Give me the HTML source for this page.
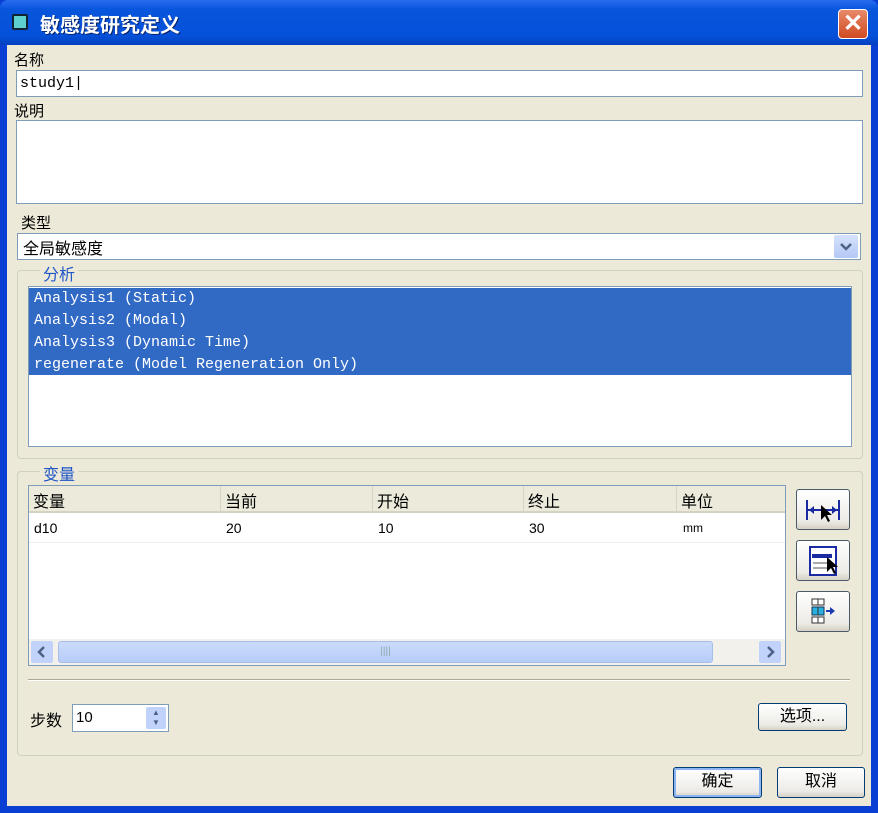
<!DOCTYPE html>
<html><head><meta charset="utf-8"><style>
*{box-sizing:border-box;margin:0;padding:0}
body{width:878px;height:813px;overflow:hidden;background:#0A3FD4;font-family:"Liberation Sans","Noto Sans CJK SC",sans-serif;font-size:15px;color:#000;position:relative}
.abs{position:absolute}
.title{left:0;top:0;width:878px;height:45px;background:linear-gradient(#2a6cf0,#0856dd 20%,#0550d8 80%,#0440c0);border-radius:8px 8px 0 0}
.content{left:7px;top:45px;width:864px;height:761px;background:#ECE9D8}
.inp{background:#fff;border:1px solid #7F9DB9}
.grp{border:1px solid #D0D0BF;border-radius:4px}
.leg{background:#ECE9D8;color:#1E56C8;padding:0 3px;font-size:16px}
.btn{background:linear-gradient(#fff,#ECEBE6 80%,#D6D0C5);border:1px solid #003C74;border-radius:3px;text-align:center;font-size:16px}
.mono{font-family:"Liberation Mono","Noto Sans CJK SC",monospace}
.hd{top:0;height:26px;border-right:1px solid #D8D5C7;padding:2px 4px;font-size:16px}
</style></head><body>
<div class="abs title"></div>
<div class="abs" style="left:12px;top:14px;width:16px;height:16px;background:#5dd0d0;border:2px solid #123;border-radius:2px"></div>
<div class="abs" style="left:40px;top:9px;color:#fff;font-size:20px;font-weight:bold;text-shadow:1px 1px #0a246a">敏感度研究定义</div>
<div class="abs" style="left:838px;top:9px;width:30px;height:30px;background:linear-gradient(#e88a6a,#d04a20);border:1px solid #fff;border-radius:4px;color:#fff;font-size:24px;line-height:27px;text-align:center;font-weight:bold">✕</div>
<div class="abs content"></div>

<div class="abs" style="left:14px;top:49px">名称</div>
<div class="abs inp mono" style="left:16px;top:70px;width:847px;height:27px;padding:4px 3px;font-size:15px">study1|</div>
<div class="abs" style="left:14px;top:100px">说明</div>
<div class="abs inp" style="left:16px;top:120px;width:847px;height:84px"></div>
<div class="abs" style="left:21px;top:212px">类型</div>
<div class="abs inp" style="left:17px;top:233px;width:844px;height:27px;padding:1px 5px;font-size:16px">全局敏感度</div>
<div class="abs" style="left:834px;top:235px;width:24px;height:23px;background:linear-gradient(#d6e2fb,#b3c8f5);border-radius:2px"><svg width="24" height="23"><path d="M7 9l5 5 5-5" stroke="#4d6185" stroke-width="2.5" fill="none"/></svg></div>

<div class="abs grp" style="left:17px;top:270px;width:846px;height:189px"></div>
<div class="abs leg" style="left:40px;top:261px">分析</div>
<div class="abs inp" style="left:28px;top:286px;width:824px;height:161px;border-color:#7F9DB9"></div>
<div class="abs mono" style="left:29px;top:288px;width:822px;height:87px;background:#316AC5;color:#fff;font-size:15px;line-height:22px;padding:0 5px">Analysis1 (Static)<br>Analysis2 (Modal)<br>Analysis3 (Dynamic Time)<br>regenerate (Model Regeneration Only)</div>

<div class="abs grp" style="left:17px;top:471px;width:846px;height:285px"></div>
<div class="abs leg" style="left:40px;top:461px">变量</div>
<div class="abs" style="left:28px;top:485px;width:758px;height:181px;background:#fff;border:1px solid #7F9DB9">
 <div class="abs" style="left:0;top:0;width:756px;height:27px;background:#EBEADB;border-bottom:2px solid #D6D2C2"></div>
 <div class="abs hd" style="left:0;width:192px">变量</div>
 <div class="abs hd" style="left:192px;width:152px">当前</div>
 <div class="abs hd" style="left:344px;width:151px">开始</div>
 <div class="abs hd" style="left:495px;width:153px">终止</div>
 <div class="abs hd" style="left:648px;width:108px;border:none">单位</div>
 <div class="abs" style="left:0;top:28px;width:756px;height:29px;border-bottom:1px solid #eee;font-size:14px">
  <span class="abs" style="left:5px;top:6px">d10</span><span class="abs" style="left:197px;top:6px">20</span><span class="abs" style="left:349px;top:6px">10</span><span class="abs" style="left:500px;top:6px">30</span><span class="abs" style="left:654px;top:7px;font-size:12px">mm</span>
 </div>
 <div class="abs" style="left:0;top:153px;width:756px;height:26px;background:#F3F1EC"></div>
 <div class="abs" style="left:2px;top:155px;width:22px;height:22px;background:#C1D3FB;border-radius:2px"><svg width="22" height="22"><path d="M13 6l-5 5 5 5" stroke="#4d6185" stroke-width="2.5" fill="none"/></svg></div>
 <div class="abs" style="left:29px;top:155px;width:655px;height:22px;background:linear-gradient(#cadbfc,#b7cdf8);border:1px solid #a8bde8;border-radius:3px;text-align:center;color:#8aa;font-size:10px;line-height:20px">||||</div>
 <div class="abs" style="left:730px;top:155px;width:22px;height:22px;background:#C1D3FB;border-radius:2px"><svg width="22" height="22"><path d="M9 6l5 5-5 5" stroke="#4d6185" stroke-width="2.5" fill="none"/></svg></div>
</div>

<div class="abs btn" style="left:796px;top:489px;width:54px;height:41px;border-color:#4a5a6a"><svg width="52" height="39"><path d="M10 10v20M42 10v20M10 20h32" stroke="#1a2aa0" stroke-width="2"/><path d="M12 20l5-4v8zM40 20l-5-4v8z" fill="#1a2aa0"/><path d="M24 15v15l4-4 3 6 2-1-3-6h5z" fill="#000"/></svg></div>
<div class="abs btn" style="left:796px;top:540px;width:54px;height:41px;border-color:#4a5a6a"><svg width="52" height="39"><rect x="13" y="6" width="26" height="28" fill="#fff" stroke="#1a2aa0" stroke-width="2"/><rect x="15" y="13" width="20" height="4" fill="#1a2aa0"/><path d="M16 22h14M16 27h14" stroke="#555"/><path d="M30 16v15l4-4 3 6 2-1-3-6h5z" fill="#000"/></svg></div>
<div class="abs btn" style="left:796px;top:591px;width:54px;height:41px;border-color:#4a5a6a"><svg width="52" height="39"><rect x="15" y="7" width="12" height="6" fill="#fff" stroke="#333"/><rect x="15" y="15" width="12" height="8" fill="#2ab0e0" stroke="#135"/><rect x="15" y="25" width="12" height="6" fill="#fff" stroke="#333"/><path d="M21 7v6M21 15v8M21 25v6" stroke="#333"/><path d="M29 19h4" stroke="#1a3ab0" stroke-width="2"/><path d="M33 15l5 4-5 4z" fill="#1a3ab0"/></svg></div>

<div class="abs" style="left:28px;top:679px;width:822px;height:2px;border-top:1px solid #ACA899;border-bottom:1px solid #fff"></div>
<div class="abs" style="left:30px;top:707px;font-size:16px">步数</div>
<div class="abs inp" style="left:72px;top:704px;width:97px;height:28px;padding:4px 3px;font-size:15px">10</div>
<div class="abs" style="left:146px;top:707px;width:20px;height:22px;background:#C1D3FB;border-radius:2px;color:#4d6185;font-size:8px;text-align:center;line-height:10px;padding-top:1px">▲<br>▼</div>
<div class="abs btn" style="left:758px;top:703px;width:89px;height:28px;line-height:26px">选项...</div>
<div class="abs btn" style="left:673px;top:767px;width:89px;height:31px;line-height:28px;box-shadow:inset 0 0 0 2px #8cb4f2">确定</div>
<div class="abs btn" style="left:777px;top:767px;width:88px;height:31px;line-height:28px">取消</div>
</body></html>
